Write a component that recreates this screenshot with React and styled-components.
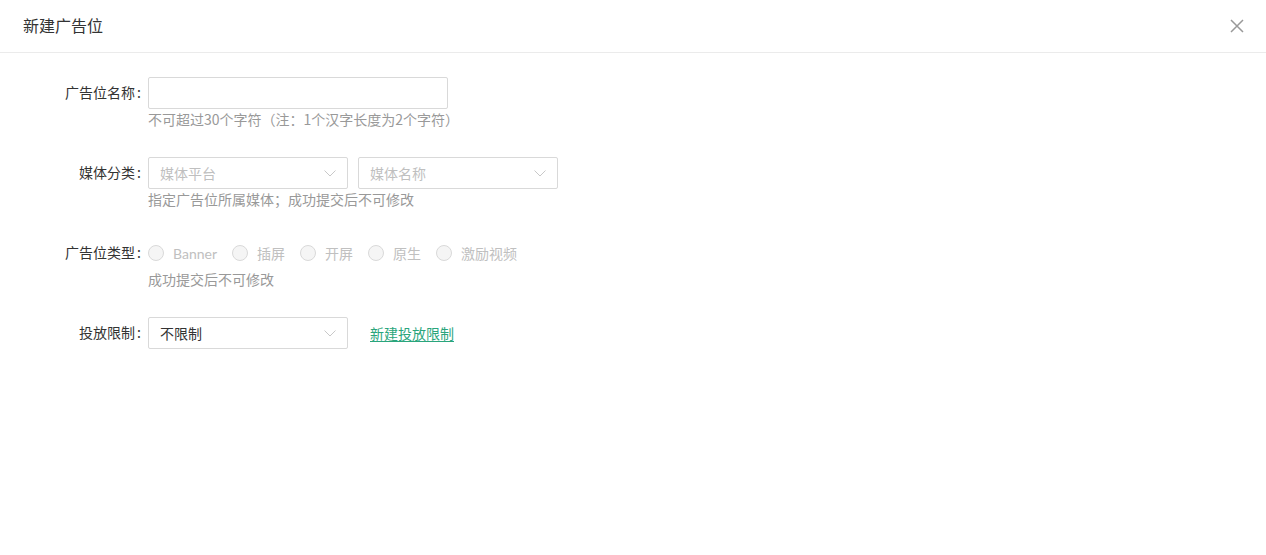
import React from "react";
import styled, { createGlobalStyle } from "styled-components";

const Global = createGlobalStyle`
  html, body { margin: 0; padding: 0; background: #fff; }
  body { font-family: "Noto Sans CJK SC", "Noto Sans", sans-serif; color: #333; }
  * { box-sizing: border-box; }
`;

const Page = styled.div`
  width: 1266px;
  height: 555px;
  background: #fff;
`;

const Header = styled.div`
  height: 53px;
  border-bottom: 1px solid #ebebeb;
  display: flex;
  align-items: center;
  justify-content: space-between;
  padding: 0 22px 0 23px;
`;

const Title = styled.div`
  font-size: 16px;
  color: #333;
  line-height: 24px;
  margin-top: -3px;
`;

const Close = styled.button`
  border: none;
  background: none;
  padding: 0;
  width: 14px;
  height: 14px;
  display: flex;
  cursor: pointer;
  margin-top: -1px;
`;

const Form = styled.div`
  padding-top: 24px;
  display: flex;
  flex-direction: column;
  gap: 28px;
`;

const Item = styled.div`
  display: flex;
  align-items: flex-start;
`;

const Label = styled.div`
  width: 148px;
  flex: none;
  text-align: right;
  font-size: 14px;
  line-height: 31px;
  color: #333;
  padding-right: 7px;
  &::after {
    content: ":";
    margin-left: 2px;
  }
`;

const Control = styled.div`
  display: flex;
  flex-direction: column;
`;

const Line = styled.div`
  display: flex;
  align-items: center;
  height: 32px;
  gap: ${(p) => p.$gap || 10}px;
`;

const Input = styled.input`
  width: 300px;
  height: 32px;
  border: 1px solid #d9d9d9;
  border-radius: 2px;
  outline: none;
  padding: 0 11px;
  font-family: inherit;
  font-size: 14px;
`;

const SelectBox = styled.div`
  width: 200px;
  height: 32px;
  border: 1px solid #d9d9d9;
  border-radius: 2px;
  display: flex;
  align-items: center;
  justify-content: space-between;
  padding: 0 11px 0 11px;
  font-size: 14px;
  line-height: 30px;
  color: ${(p) => (p.$placeholder ? "#bfbfbf" : "#333")};
`;

const Hint = styled.div`
  font-size: 14px;
  line-height: 20px;
  color: #999;
`;

const RadioGroup = styled.div`
  display: flex;
  align-items: center;
  gap: 15px;
`;

const RadioItem = styled.label`
  display: flex;
  align-items: center;
  gap: 9px;
  font-family: "Lato", "Noto Sans CJK SC", sans-serif;
  font-size: 14px;
  color: #c0c0c0;
`;

const RadioCircle = styled.span`
  width: 16px;
  height: 16px;
  border-radius: 50%;
  border: 1px solid #d9d9d9;
  background: #f5f5f5;
  flex: none;
`;

const Link = styled.a`
  font-size: 14px;
  color: #2aa57c;
  text-decoration: underline;
  text-underline-offset: 2px;
  margin-left: 12px;
  cursor: pointer;
`;

const Chevron = () => (
  <svg width="12" height="7" viewBox="0 0 12 7" fill="none">
    <path d="M0.5 0.5 L6 6 L11.5 0.5" stroke="#c8c8c8" strokeWidth="1" />
  </svg>
);

const CloseIcon = () => (
  <svg width="14" height="14" viewBox="0 0 14 14" fill="none">
    <path d="M1 1 L13 13 M13 1 L1 13" stroke="#999" strokeWidth="1.5" />
  </svg>
);

const Select = ({ children, placeholder }) => (
  <SelectBox $placeholder={placeholder}>
    <span>{children}</span>
    <Chevron />
  </SelectBox>
);

export default function App() {
  const types = ["Banner", "插屏", "开屏", "原生", "激励视频"];
  return (
    <Page>
      <Global />
      <Header>
        <Title>新建广告位</Title>
        <Close aria-label="close">
          <CloseIcon />
        </Close>
      </Header>
      <Form>
        <Item>
          <Label>广告位名称</Label>
          <Control>
            <Input />
            <Hint>不可超过30个字符（注：1个汉字长度为2个字符）</Hint>
          </Control>
        </Item>
        <Item>
          <Label>媒体分类</Label>
          <Control>
            <Line>
              <Select placeholder>媒体平台</Select>
              <Select placeholder>媒体名称</Select>
            </Line>
            <Hint>指定广告位所属媒体；成功提交后不可修改</Hint>
          </Control>
        </Item>
        <Item>
          <Label>广告位类型</Label>
          <Control>
            <Line>
              <RadioGroup>
                {types.map((t) => (
                  <RadioItem key={t}>
                    <RadioCircle />
                    {t}
                  </RadioItem>
                ))}
              </RadioGroup>
            </Line>
            <Hint>成功提交后不可修改</Hint>
          </Control>
        </Item>
        <Item>
          <Label>投放限制</Label>
          <Control>
            <Line $gap={10}>
              <Select>不限制</Select>
              <Link>新建投放限制</Link>
            </Line>
          </Control>
        </Item>
      </Form>
    </Page>
  );
}
